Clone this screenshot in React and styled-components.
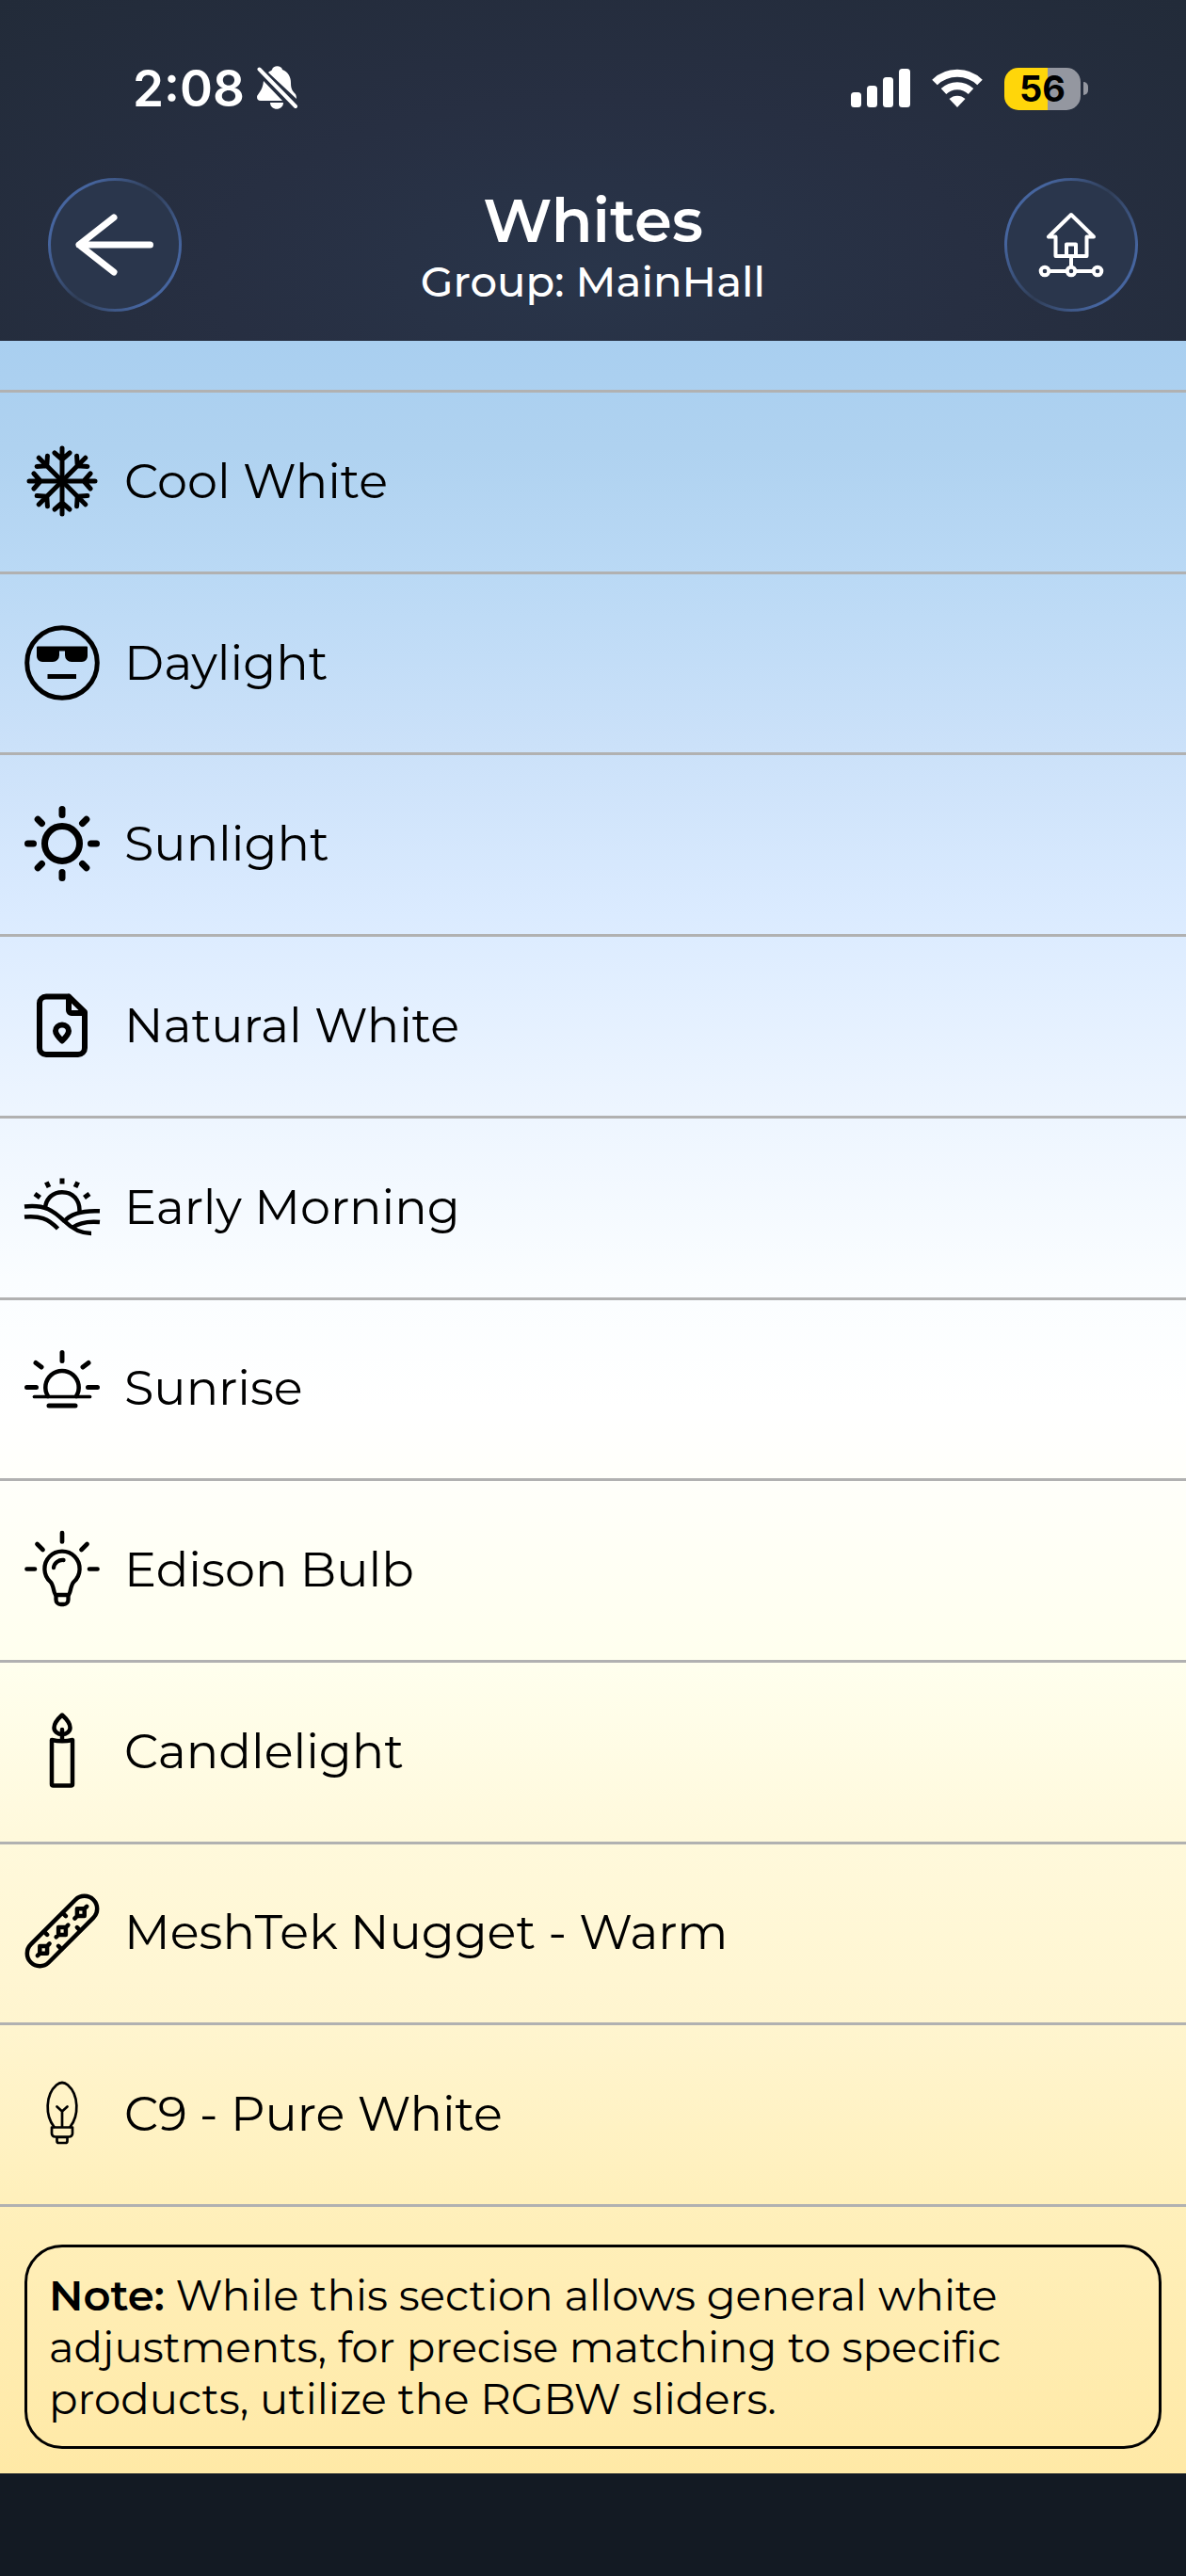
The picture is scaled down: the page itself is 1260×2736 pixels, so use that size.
import React from 'react';
import styled, { createGlobalStyle } from 'styled-components';

const GlobalStyle = createGlobalStyle`
  * {
    box-sizing: border-box;
  }
  body {
    margin: 0;
    background: #131a23;
    font-family: Montserrat, Inter, 'Liberation Sans', sans-serif;
  }
`;

const Screen = styled.div`
  display: flex;
  flex-direction: column;
  min-height: 100vh;
`;

const Header = styled.header`
  padding-bottom: 31px;
  color: #fff;
  background: radial-gradient(ellipse at 50% 80%, #29354a 0%, #272f42 45%, #222b39 100%);
`;

const StatusBar = styled.div`
  display: flex;
  align-items: center;
  justify-content: space-between;
  padding: 60px 104px 0 141px;
`;

const StatusGroup = styled.div`
  display: flex;
  align-items: center;
  gap: ${(props) => props.$gap}px;
`;

const Time = styled.span`
  font-family: Inter, 'Liberation Sans', sans-serif;
  font-size: 53px;
  font-weight: 600;
  line-height: 68px;
`;

const Battery = styled.div`
  display: flex;
  align-items: center;
  gap: 3px;

  &::after {
    content: '';
    width: 5px;
    height: 14px;
    border-radius: 0 7px 7px 0;
    background: #9497a0;
  }
`;

const BatteryBody = styled.div`
  width: 81px;
  height: 45px;
  border-radius: 15px;
  background: linear-gradient(to right, #ffd60a 57%, #9497a0 57%);
  color: #000;
  font-family: Inter, 'Liberation Sans', sans-serif;
  font-size: 38px;
  font-weight: 700;
  line-height: 45px;
  text-align: center;
`;

const NavBar = styled.nav`
  display: flex;
  align-items: center;
  justify-content: space-between;
  padding: 61px 51px 0;
`;

const RoundButton = styled.button`
  display: flex;
  align-items: center;
  justify-content: center;
  width: 142px;
  height: 142px;
  padding: 0;
  border: 3px solid transparent;
  border-radius: 50%;
  color: #fff;
  background:
    linear-gradient(#2a364c, #2a364c) padding-box,
    linear-gradient(125deg, #46659f 20%, #303e57 50%, #46659f 80%) border-box;
`;

const Titles = styled.div`
  padding-top: 6px;
  text-align: center;
`;

const Title = styled.h1`
  margin: 0;
  font-size: 64px;
  font-weight: 600;
  line-height: 72px;
`;

const Subtitle = styled.p`
  margin: 0;
  font-size: 45px;
  font-weight: 500;
  line-height: 58px;
`;

const Content = styled.main`
  display: flex;
  flex: 1;
  flex-direction: column;
  background: linear-gradient(
    to bottom,
    #a9cff0 0%,
    #afd2f0 5%,
    #bad9f5 11%,
    #cbe1f9 19%,
    #dbebff 27%,
    #edf5ff 36%,
    #fafdff 44%,
    #ffffff 50%,
    #ffffee 62%,
    #fff9dc 70%,
    #fff5cf 79%,
    #fff0bc 87%,
    #ffe9a6 100%
  );
`;

const List = styled.ul`
  display: flex;
  flex: 1;
  flex-direction: column;
  margin: 0;
  padding: 52px 0 0;
  list-style: none;
`;

const Item = styled.li`
  display: flex;
  flex: 1;
  border-top: 3px solid #b1b1b1;

  &:last-child {
    border-bottom: 3px solid #b1b1b1;
  }
`;

const RowButton = styled.button`
  display: flex;
  flex: 1;
  align-items: center;
  gap: 26px;
  padding: 0 26px 2px;
  border: 0;
  background: none;
  color: #000;
  font-family: inherit;
  font-size: 51px;
  font-weight: 400;
  line-height: 62px;
  text-align: left;
`;

const Icon = styled.svg`
  flex: none;
  overflow: visible;
  fill: none;
  stroke: currentColor;
  stroke-linecap: round;
  stroke-linejoin: round;
`;

const Note = styled.p`
  margin: 40px 26px 26px;
  padding: 23px;
  border: 3px solid #000;
  border-radius: 40px;
  font-size: 45px;
  font-weight: 400;
  line-height: 55px;

  strong {
    font-weight: 600;
  }
`;

const BottomBar = styled.footer`
  height: 109px;
  background: #131a23;
`;

const ARMS = [0, 45, 90, 135, 180, 225, 270, 315];

const icons = {
  snowflake: (
    <g strokeWidth="5">
      {ARMS.map((a) => (
        <path key={a} transform={`rotate(${a} 40 40)`} d="M40 40V5M32 10l8 7l8-7" />
      ))}
    </g>
  ),
  daylight: (
    <>
      <circle cx="40" cy="40" r="37.3" strokeWidth="5" />
      <path
        d="M14 22.500H66a1 1 0 0 1 1 1V33a6 6 0 0 1-6 6H50a7 7 0 0 1-7-7V27.500H37V32a7 7 0 0 1-7 7H19a6 6 0 0 1-6-6V23.500a1 1 0 0 1 1-1z"
        fill="currentColor"
        stroke="none"
      />
      <path d="M24.500 54.500H55" strokeWidth="5" strokeLinecap="butt" />
    </>
  ),
  sun: (
    <>
      <circle cx="40" cy="40" r="18.500" strokeWidth="7" />
      {ARMS.map((a) => (
        <path key={a} transform={`rotate(${a} 40 40)`} d="M40 3.500V9.500" strokeWidth="7" />
      ))}
    </>
  ),
  file: (
    <path
      strokeWidth="6"
      d="M47 9.500H23a7 7 0 0 0-7 7V64a7 7 0 0 0 7 7H57a7 7 0 0 0 7-7V26L47 9.500V24a3 3 0 0 0 3 3H63M40 56.500c-4-4-7-8-7-10.500a7 6.500 0 0 1 14 0c0 3-3 6.500-7 10.500z"
    />
  ),
  morning: (
    <g strokeWidth="4.500" strokeLinecap="butt">
      <path d="M40 9.500V15.500M23.300 13.500L26 19M56.700 13.500L54 19M11 26L16.500 30M69 26L63.500 30" strokeWidth="5" />
      <path d="M22 41C23 30 31 24.300 40 24.300C51 24.300 59 32 58.500 45" />
      <path d="M0 39.500C22 37 31 44 42.500 55C50 62.500 59 68 71 68" />
      <path d="M0 50.500C16 49 25 52 35.500 63" />
      <path d="M80 44.300C63 43.500 50 46 42.500 55" />
      <path d="M80 56C69 55 59 56 50.500 62" />
    </g>
  ),
  sunrise: (
    <g strokeWidth="5">
      <path d="M40 2.500V11.500M12 13.500L18 18M68 13.500L62 18M2.500 39.500H12.500M67.500 39.500H77.500M26 59H54" />
      <path d="M25 49A17.700 17.700 0 1 1 55 49" strokeWidth="4.500" />
      <path d="M10.500 49.500H69.500" strokeWidth="3.700" />
    </g>
  ),
  bulb: (
    <g strokeWidth="4.300">
      <path d="M40 1V10.500M13.500 13L19.500 19M66.500 13L60.500 19M2.500 39.500H11M69 39.500H77.500" strokeWidth="4.700" />
      <path d="M33.500 67C31 67 31.500 57 27.500 53A18.600 18.600 0 1 1 52.500 53C48.500 57 49 67 46.500 67z" />
      <path d="M33.500 67V72a5 5 0 0 0 5 5H41.500a5 5 0 0 0 5-5V67M31 38A9.500 9.500 0 0 1 41.500 30" />
    </g>
  ),
  candle: (
    <g strokeWidth="4.500">
      <path d="M40 1.500C35 6 31.500 11 31.500 15a8.500 7 0 0 0 17 0C48.500 11 45 6 40 1.500zM40 17V28" />
      <path d="M29 28C36 29.700 44 29.700 51 28V75a1.500 1.500 0 0 1-1.500 1.500H30.500a1.500 1.500 0 0 1-1.500-1.500z" />
    </g>
  ),
  nugget: (
    <g strokeWidth="4.500" transform="rotate(-45 40 39)">
      <rect x="-7" y="25.500" width="94" height="27" rx="13.500" />
      {[-28, 0, 28].map((x) => (
        <path key={x} transform={`translate(${x} 0)`} d="M34.500 39L40 33.500L45.500 39L40 44.500zM31 39h3M46 39h3" />
      ))}
      <path d="M26 26v4.500M54 26v4.500M26 52v-4.500M54 52v-4.500" />
    </g>
  ),
  c9: (
    <g strokeWidth="2.700">
      <path d="M31.500 54C22 42 22 20 34 9.500q6-5 12 0C58 20 58 42 48.500 54" />
      <path d="M29 54.500H51V61a3.500 3.500 0 0 1-3.500 3.500H32.500a3.500 3.500 0 0 1-3.500-3.500zM34.500 65H45.500V69a2 2 0 0 1-2 2H36.500a2 2 0 0 1-2-2zM40 54V37.500L34.500 32.500M40 37.500L45.500 32.500" />
    </g>
  ),
};

const whites = [
  { name: 'Cool White', icon: 'snowflake' },
  { name: 'Daylight', icon: 'daylight' },
  { name: 'Sunlight', icon: 'sun' },
  { name: 'Natural White', icon: 'file' },
  { name: 'Early Morning', icon: 'morning' },
  { name: 'Sunrise', icon: 'sunrise' },
  { name: 'Edison Bulb', icon: 'bulb' },
  { name: 'Candlelight', icon: 'candle' },
  { name: 'MeshTek Nugget - Warm', icon: 'nugget' },
  { name: 'C9 - Pure White', icon: 'c9' },
];

function App() {
  return (
    <Screen>
      <GlobalStyle />
      <Header>
        <StatusBar>
          <StatusGroup $gap={13}>
            <Time>2:08</Time>
            <svg width="44" height="48" viewBox="0 0 44 48" fill="#fff">
              <path d="M7 16L27 37H4Q0 37 0 33C0 30 6 27 7 16zM12 7C14 5 16 5 16 4C17 -1 26 -1 27 4C33 6 36 12 36 18C36 25 38 27 41 30Q42 32 42 35zM14 39H28C28 48 14 48 14 39z" />
              <path d="M2.500 3.500L41 43" stroke="#fff" strokeWidth="4" strokeLinecap="round" />
            </svg>
          </StatusGroup>
          <StatusGroup $gap={23}>
            <svg width="63" height="42" viewBox="0 0 63 42" fill="#fff">
              <rect x="0" y="25" width="11" height="16" rx="3.500" />
              <rect x="17" y="18" width="11" height="23" rx="3.500" />
              <rect x="34" y="9" width="11" height="32" rx="3.500" />
              <rect x="51" y="0" width="12" height="41" rx="3.500" />
            </svg>
            <svg width="54" height="42" viewBox="0 0 54 42">
              <path d="M3 14.500A34.500 34.500 0 0 1 51 14.500M12.500 24A21 21 0 0 1 41.500 24" fill="none" stroke="#fff" strokeWidth="8" />
              <path d="M27 41L18.500 32A12.500 12.500 0 0 1 35.500 32z" fill="#fff" />
            </svg>
            <Battery>
              <BatteryBody>56</BatteryBody>
            </Battery>
          </StatusGroup>
        </StatusBar>
        <NavBar>
          <RoundButton aria-label="Back">
            <Icon width="84" height="66" viewBox="0 0 84 66" strokeWidth="7">
              <path d="M79.500 33H4M41 4L4 33L41 62" />
            </Icon>
          </RoundButton>
          <Titles>
            <Title>Whites</Title>
            <Subtitle>Group: MainHall</Subtitle>
          </Titles>
          <RoundButton aria-label="Home">
            <Icon width="70" height="70" viewBox="0 0 70 70" strokeWidth="4">
              <path d="M35 3L11 26.500H18.500V47H51.500V26.500H59zM30 47V34.500H40V47M35 47V57M13 63H29M41 63H57" />
              <circle cx="7" cy="63" r="4.300" />
              <circle cx="35" cy="63" r="4.300" />
              <circle cx="63" cy="63" r="4.300" />
            </Icon>
          </RoundButton>
        </NavBar>
      </Header>
      <Content>
        <List>
          {whites.map((white) => (
            <Item key={white.name}>
              <RowButton>
                <Icon width="80" height="80" viewBox="0 0 80 80">
                  {icons[white.icon]}
                </Icon>
                {white.name}
              </RowButton>
            </Item>
          ))}
        </List>
        <Note>
          <strong>Note:</strong> While this section allows general white adjustments, for precise
          matching to specific products, utilize the RGBW sliders.
        </Note>
      </Content>
      <BottomBar />
    </Screen>
  );
}

export default App;
